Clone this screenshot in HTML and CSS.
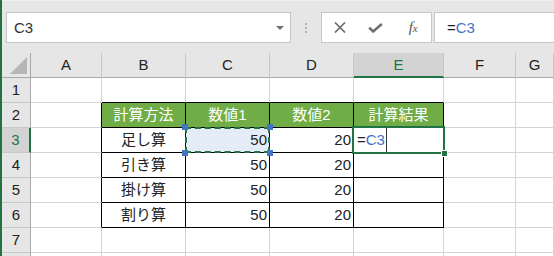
FILE: index.html
```html
<!DOCTYPE html>
<html lang="ja">
<head>
  <meta charset="UTF-8" />
  <title>計算シート</title>
  <link rel="stylesheet" href="styles.css">
</head>
<body>
  <div class="app">
    <div class="formula-bar">
      <div class="name-box"><span>C3</span><span class="drop"></span></div>
      <div class="grip"><i></i><i></i><i></i></div>
      <div class="fx-buttons">
        <span class="slot"><svg width="12" height="11" viewBox="0 0 12 11"><path d="M1 0.5L11 10.5M11 0.5L1 10.5" stroke="#6e6e6e" stroke-width="1.7" fill="none"/></svg></span>
        <span class="slot"><svg width="15" height="10" viewBox="0 0 15 10"><path d="M1.2 4.6L5.2 8.4L13.8 1" stroke="#6e6e6e" stroke-width="2.6" fill="none"/></svg></span>
        <span class="slot fx">f<small>x</small></span>
      </div>
      <div class="formula-input">=<span class="ref-text">C3</span></div>
    </div>

    <div class="sheet">
      <!-- column headers -->
      <div class="corner"><svg width="17" height="17" viewBox="0 0 17 17"><path d="M17 0V17H0Z" fill="#b6b6b6"/></svg></div>
      <div class="col-hd">A</div>
      <div class="col-hd">B</div>
      <div class="col-hd">C</div>
      <div class="col-hd">D</div>
      <div class="col-hd on">E</div>
      <div class="col-hd">F</div>
      <div class="col-hd">G</div>

      <!-- row 1 -->
      <div class="row-hd">1</div>
      <div></div>
      <div class="t-top"></div>
      <div class="t-top"></div>
      <div class="t-top"></div>
      <div class="t-top"></div>
      <div></div>
      <div></div>

      <!-- row 2 -->
      <div class="row-hd">2</div>
      <div class="t-left"></div>
      <div class="t th">計算方法</div>
      <div class="t th">数値1</div>
      <div class="t th">数値2</div>
      <div class="t th">計算結果</div>
      <div></div>
      <div></div>

      <!-- row 3 -->
      <div class="row-hd on">3</div>
      <div class="t-left"></div>
      <div class="t label">足し算</div>
      <div class="t num ref">50<i class="h tl"></i><i class="h tr"></i><i class="h bl"></i><i class="h br"></i></div>
      <div class="t num">20</div>
      <div class="t editing">=<span class="ref-text">C3</span><span class="caret"></span><i class="fill-handle"></i></div>
      <div></div>
      <div></div>

      <!-- row 4 -->
      <div class="row-hd">4</div>
      <div class="t-left"></div>
      <div class="t label">引き算</div>
      <div class="t num">50</div>
      <div class="t num">20</div>
      <div class="t"></div>
      <div></div>
      <div></div>

      <!-- row 5 -->
      <div class="row-hd">5</div>
      <div class="t-left"></div>
      <div class="t label">掛け算</div>
      <div class="t num">50</div>
      <div class="t num">20</div>
      <div class="t"></div>
      <div></div>
      <div></div>

      <!-- row 6 -->
      <div class="row-hd">6</div>
      <div class="t-left"></div>
      <div class="t label">割り算</div>
      <div class="t num">50</div>
      <div class="t num">20</div>
      <div class="t"></div>
      <div></div>
      <div></div>

      <!-- row 7 -->
      <div class="row-hd">7</div>
      <div></div><div></div><div></div><div></div><div></div><div></div><div></div>

      <!-- row 8, only its top edge shows -->
      <div class="row-hd"></div>
      <div></div><div></div><div></div><div></div><div></div><div></div><div></div>
    </div>
  </div>
</body>
</html>
```

FILE: styles.css
```css
body {
  margin: 0;
  background-color: #e6e6e6;
  font-family: 'Liberation Sans', 'Noto Sans CJK JP', sans-serif;
  font-size: 15px;
  color: #222;
  overflow: hidden;
}
.app {
  height: 256px;
  border-left: 2px solid #217346;
  overflow: hidden;
}

/* formula bar */
.formula-bar {
  display: flex;
  align-items: flex-start;
  height: 53px;
  padding-top: 11px;
  box-sizing: border-box;
  border-top: 1px solid #f0f0f0;
}
.name-box, .fx-buttons, .formula-input {
  height: 31px;
  box-sizing: border-box;
  background-color: #fff;
  border: 1px solid #c6c6c6;
  display: flex;
  align-items: center;
}
.name-box {
  width: 285px;
  margin-left: 4px;
  padding: 0 6px 0 7px;
  justify-content: space-between;
  color: #333;
}
.drop {
  width: 0;
  height: 0;
  border-left: 4px solid transparent;
  border-right: 4px solid transparent;
  border-top: 4px solid #707070;
}
.grip {
  width: 30px;
  height: 31px;
  display: flex;
  flex-direction: column;
  align-items: center;
  justify-content: center;
  gap: 2px;
}
.grip i {
  width: 2px;
  height: 2px;
  background-color: #b3b3b3;
}
.fx-buttons {
  width: 111px;
}
.slot {
  width: 36px;
  display: flex;
  justify-content: center;
  align-items: center;
}
.fx {
  font-family: 'Liberation Serif', serif;
  font-style: italic;
  font-size: 15px;
  color: #555;
  padding-left: 2px;
}
.fx small {
  font-size: 11px;
}
.formula-input {
  flex: 1;
  margin-left: 2px;
  border-right: none;
  padding-left: 12px;
  color: #222;
}
.ref-text {
  color: #4472c4;
}

/* grid */
.sheet {
  display: grid;
  grid-template-columns: 29px 71px 84px 84px 84px 90px 72px 1fr;
  grid-auto-rows: 25px;
  background-color: #fff;
}
.sheet > * {
  box-sizing: border-box;
  border-right: 1px solid #d4d4d4;
  border-bottom: 1px solid #d4d4d4;
  line-height: 24px;
  padding: 0 2px;
  white-space: nowrap;
}
.corner {
  background-color: #e6e6e6;
  border-right-color: #a8a8a8;
  border-bottom-color: #a8a8a8;
  display: flex;
  justify-content: flex-end;
  align-items: flex-end;
  padding: 0 3px 3px 0;
}
.col-hd {
  background-color: #e6e6e6;
  border-right-color: #c8c8c8;
  border-bottom-color: #a8a8a8;
  text-align: center;
}
.col-hd.on {
  background-color: #d3d3d3;
  color: #217346;
  border-bottom: 2px solid #217346;
  line-height: 23px;
}
.row-hd {
  background-color: #e6e6e6;
  border-right-color: #a8a8a8;
  border-bottom-color: #c8c8c8;
  text-align: center;
}
.row-hd.on {
  background-color: #d3d3d3;
  color: #217346;
  border-right: 2px solid #217346;
}

/* table */
.t-top {
  border-bottom-color: #000;
}
.t-left {
  border-right-color: #000;
}
.t {
  border-right-color: #000;
  border-bottom-color: #000;
}
.th {
  background-color: #70ad47;
  color: #fff;
  text-align: center;
}
.label {
  text-align: center;
}
.num {
  text-align: right;
}

/* referenced cell */
.ref {
  position: relative;
  background-color: #e4ecf7;
}
.ref::before {
  content: "";
  position: absolute;
  left: -1px;
  top: -1px;
  right: -1px;
  bottom: -1px;
  border: 2px dashed #217346;
}
.h {
  position: absolute;
  width: 6px;
  height: 6px;
  background-color: #4472c4;
}
.h.tl { left: -4px; top: -4px; }
.h.tr { right: -4px; top: -4px; }
.h.bl { left: -4px; bottom: -4px; }
.h.br { right: -4px; bottom: -4px; }

/* active cell */
.editing {
  position: relative;
  padding-left: 3px;
}
.editing::after {
  content: "";
  position: absolute;
  left: -2px;
  top: -2px;
  right: -2px;
  bottom: -2px;
  border: 2px solid #217346;
}
.caret {
  display: inline-block;
  width: 1px;
  height: 24px;
  margin-left: 1px;
  vertical-align: top;
  background-color: #333;
}
.fill-handle {
  position: absolute;
  right: -5px;
  bottom: -5px;
  width: 5px;
  height: 5px;
  background-color: #217346;
  border: 1px solid #fff;
  z-index: 1;
}
```
